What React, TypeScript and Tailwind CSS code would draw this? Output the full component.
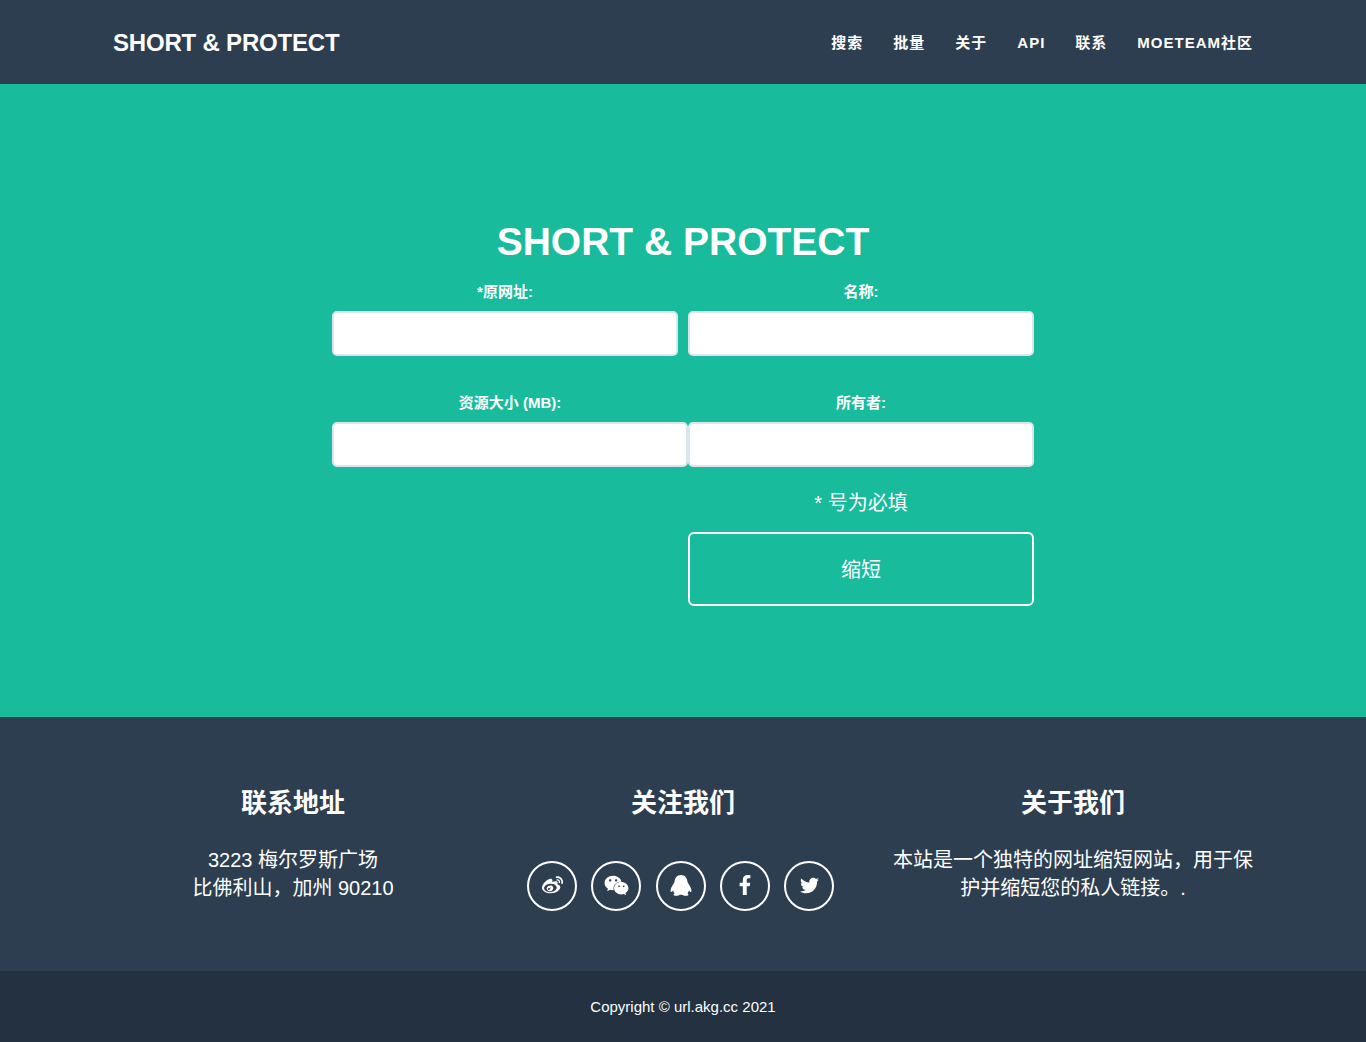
import { FaWeibo, FaWeixin, FaFacebookF, FaTwitter } from 'react-icons/fa';

const navLinks = ['搜索', '批量', '关于', 'API', '联系', 'MOETEAM社区'];

function QqIcon() {
  return (
    <svg width="22" height="21" viewBox="0 0 22 21" fill="currentColor">
      <path d="M11 0C6.5 0 4.8 3.5 4.5 7C3.5 9 1 12 .6 15C.4 17 1.2 17.6 2.2 16.6L3 15.6C3.4 17 4 18 4.6 18.6C3 19.2 3 20.8 6 20.8C8 20.8 9.5 20.2 10 19.8L12 19.8C12.5 20.2 14 20.8 16 20.8C19 20.8 19 19.2 17.4 18.6C18 18 18.6 17 19 15.6L19.8 16.6C20.8 17.6 21.6 17 21.4 15C21 12 18.5 9 17.5 7C17.2 3.5 15.5 0 11 0Z" />
    </svg>
  );
}

const socials = [
  { icon: FaWeibo, size: 'text-[21px]' },
  { icon: FaWeixin, size: 'text-[25px]' },
  { icon: QqIcon, size: 'text-[22px]' },
  { icon: FaFacebookF, size: 'text-[20px]' },
  { icon: FaTwitter, size: 'text-[19px]' },
];

const inputClass = 'block h-[45px] rounded-[5px] border-2 border-[#dce4ec] bg-white';
const labelClass = 'mb-[9px] block pt-[1px] text-center text-[15px] font-bold leading-[20px]';

export default function App() {
  return (
    <div className="min-h-[1042px] bg-[#2c3e50] text-white font-['Liberation_Sans','Noto_Sans_CJK_SC',sans-serif]">
      <header className="h-[84px] bg-[#2c3e50]">
        <nav className="mx-auto flex h-full w-[1140px] items-center justify-between">
          <a className="pt-[2px] text-[24px] font-bold tracking-[-0.2px]">SHORT &amp; PROTECT</a>
          <div className="flex items-center gap-[30px] pt-[2px]">
            {navLinks.map((link) => (
              <a key={link} className="text-[15px] font-bold tracking-[1px]">
                {link}
              </a>
            ))}
          </div>
        </nav>
      </header>

      <main className="flex h-[633px] flex-col items-center bg-[#18bc9c] pt-[134px]">
        <h1 className="text-center text-[39px] font-bold leading-[48px]">SHORT &amp; PROTECT</h1>
        <form className="mt-[15px] w-[702px]">
          <div className="flex gap-[10px]">
            <label className="block w-[346px]">
              <span className={labelClass}>*原网址:</span>
              <input className={`${inputClass} w-full`} />
            </label>
            <label className="block w-[346px]">
              <span className={labelClass}>名称:</span>
              <input className={`${inputClass} w-full`} />
            </label>
          </div>
          <div className="mt-[36px] flex">
            <label className="block w-[356px]">
              <span className={labelClass}>资源大小 (MB):</span>
              <input className={`${inputClass} w-full`} />
            </label>
            <label className="block w-[346px]">
              <span className={labelClass}>所有者:</span>
              <input className={`${inputClass} w-full`} />
            </label>
          </div>
          <div className="ml-[356px] w-[346px]">
            <p className="mt-[22px] text-center text-[20px] leading-[28px]">* 号为必填</p>
            <button
              type="button"
              className="mt-[15px] block h-[74px] w-full rounded-[6px] border-2 border-white pt-[1px] text-center text-[20px]"
            >
              缩短
            </button>
          </div>
        </form>
      </main>

      <footer className="h-[254px] bg-[#2c3e50]">
        <div className="mx-auto grid w-[1170px] grid-cols-3 pt-[67px] text-center">
          <div>
            <h4 className="pt-[1px] text-[26px] font-bold leading-[36px]">联系地址</h4>
            <p className="mt-[25px] text-[20px] leading-[28px]">
              3223 梅尔罗斯广场
              <br />
              比佛利山，加州 90210
            </p>
          </div>
          <div>
            <h4 className="pt-[1px] text-[26px] font-bold leading-[36px]">关注我们</h4>
            <ul className="mt-[40px] flex justify-center gap-[14.25px] pr-[5px]">
              {socials.map(({ icon: Icon, size }, i) => (
                <li key={i}>
                  <a className={`flex h-[50px] w-[50px] items-center justify-center rounded-full border-2 border-white pb-[2px] ${size}`}>
                    <Icon />
                  </a>
                </li>
              ))}
            </ul>
          </div>
          <div>
            <h4 className="pt-[1px] text-[26px] font-bold leading-[36px]">关于我们</h4>
            <p className="mx-auto mt-[25px] w-[364px] text-[20px] leading-[28px]">
              本站是一个独特的网址缩短网站，用于保护并缩短您的私人链接。.
            </p>
          </div>
        </div>
      </footer>

      <div className="flex h-[71px] items-center justify-center bg-[#233140] pt-[1px] text-[15px]">
        Copyright © url.akg.cc 2021
      </div>
    </div>
  );
}
